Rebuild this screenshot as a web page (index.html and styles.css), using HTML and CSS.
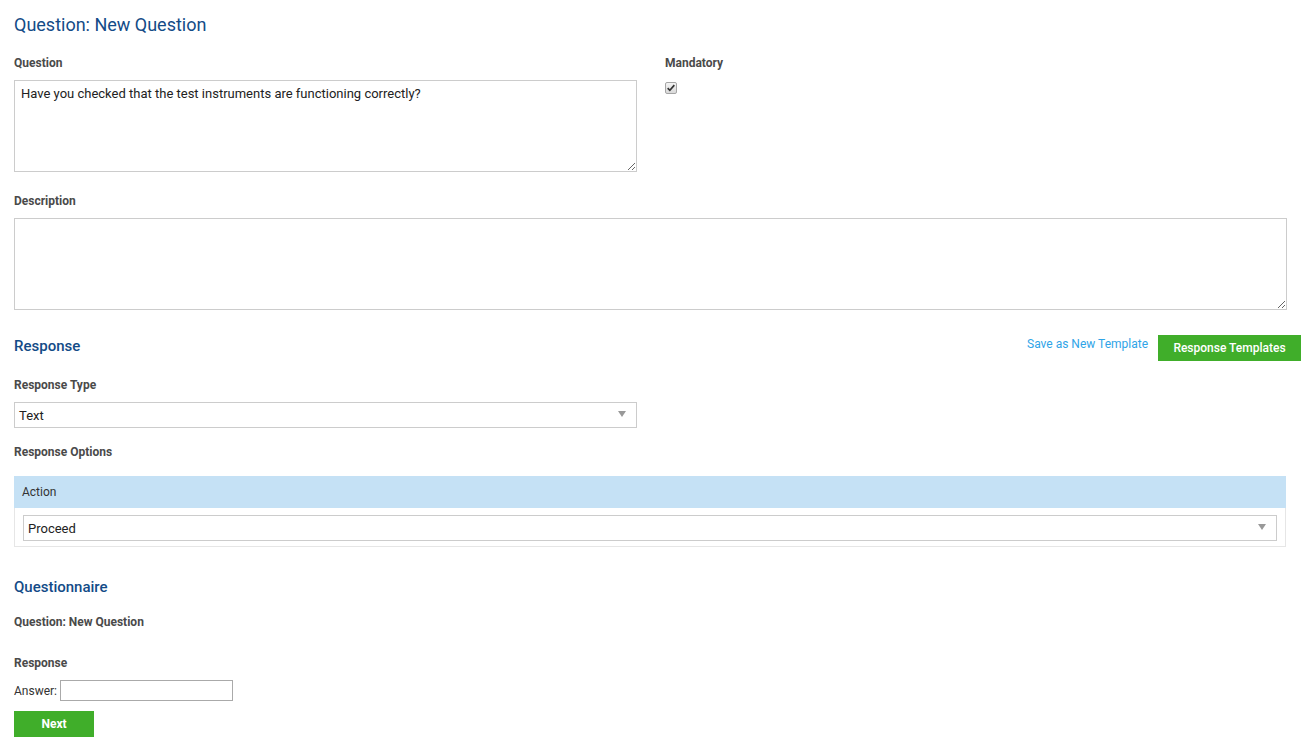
FILE: index.html
```html
<!DOCTYPE html>
<html>
<head>
<meta charset="utf-8">
<link rel="stylesheet" href="styles.css">
</head>
<body>
<div class="page">
  <h1 class="title">Question: New Question</h1>
  <div class="row-top">
    <div class="col-q">
      <div class="label">Question</div>
      <textarea class="ta ta-q">Have you checked that the test instruments are functioning correctly?</textarea>
    </div>
    <div class="col-m">
      <div class="label">Mandatory</div>
      <span class="cb" role="checkbox" aria-checked="true"><svg viewBox="0 0 12 12" width="10" height="10"><path d="M2 6.2 L4.6 8.8 L10 2.6" fill="none" stroke="#333" stroke-width="2"/></svg></span>
    </div>
  </div>
  <div class="label lbl-desc">Description</div>
  <textarea class="ta ta-d"></textarea>

  <div class="resp-head">
    <h2 class="section">Response</h2>
    <div class="resp-actions">
      <a class="link">Save as New Template</a>
      <button class="btn btn-tpl">Response Templates</button>
    </div>
  </div>

  <div class="label lbl-rt">Response Type</div>
  <div class="select sel-rt"><span>Text</span><span class="arrow"></span></div>

  <div class="label lbl-ro">Response Options</div>
  <div class="table">
    <div class="thead">Action</div>
    <div class="trow">
      <div class="select sel-act"><span>Proceed</span><span class="arrow"></span></div>
    </div>
  </div>

  <h2 class="section sec-qn">Questionnaire</h2>
  <div class="label lbl-qq">Question: New Question</div>
  <div class="label lbl-r">Response</div>
  <div class="answer"><span>Answer:</span><input type="text" class="ans-input"></div>
  <button class="btn btn-next">Next</button>
</div>
</body>
</html>
```
FILE: styles.css
```css
* { box-sizing: border-box; }
html, body { margin: 0; padding: 0; background: #fff; }
body { font-family: Roboto, "Liberation Sans", sans-serif; color: #333; }
.page { padding: 0 17px 0 14px; }
.title { margin: 0; padding-top: 14px; font-size: 18px; font-weight: 400; color: #134b87; line-height: 22px; }
.label { font-size: 12px; font-weight: 700; color: #4a4a4a; line-height: 14px; }
.row-top { display: flex; margin-top: 20px; }
.col-q { width: 651px; }
.ta { display: block; width: 100%; border: 1px solid #ccc; font-family: Roboto, "Liberation Sans", sans-serif; font-size: 13px; color: #222; padding: 5px 6px; resize: vertical; margin: 0; }
.col-q .label { margin-bottom: 10px; }
.ta-q { width: 623px; height: 92px; line-height: 16px; }
.col-m .label { margin-bottom: 12px; }
.cb { display: flex; align-items: center; justify-content: center; width: 12px; height: 12px; border: 1px solid #a5a5a5; border-radius: 2px; background: linear-gradient(#f4f4f4, #d9d9d9); margin-left: 0; }
.lbl-desc { margin-top: 22px; margin-bottom: 10px; }
.ta-d { width: 1273px; height: 92px; }
.resp-head { display: flex; justify-content: space-between; align-items: flex-start; margin-top: 25px; margin-right: -14px; }
.section { margin: 0; font-size: 15px; font-weight: 500; color: #134b87; line-height: 18px; }
.resp-head .section { margin-top: 2px; }
.resp-actions { display: flex; align-items: flex-start; }
.link { color: #2fa4e7; font-size: 12px; line-height: 14px; margin-top: 2px; margin-right: 10px; cursor: pointer; }
.btn { border: none; background: #40ae2a; color: #fff; font-family: Roboto, "Liberation Sans", sans-serif; font-size: 12px; font-weight: 500; margin: 0; padding: 0; }
.btn-tpl { width: 143px; height: 26px; }
.lbl-rt { margin-top: 17px; margin-bottom: 10px; }
.select { display: flex; align-items: center; justify-content: space-between; border: 1px solid #ccc; height: 26px; padding: 0 10px 0 4px; font-size: 13px; color: #222; background: #fff; }
.sel-rt { width: 623px; }
.arrow { width: 0; height: 0; border-left: 4px solid transparent; border-right: 4px solid transparent; border-top: 6px solid #999; margin-top: -3px; }
.lbl-ro { margin-top: 17px; margin-bottom: 17px; }
.table { width: 1272px; border: 1px solid #e6e6e6; border-top: none; }
.thead { background: #c5e1f5; height: 32px; line-height: 32px; padding-left: 8px; font-size: 12px; color: #333; margin: 0 -1px; }
.trow { padding: 7px 8px 5px 8px; }
.sel-act { width: 1254px; height: 26px; }
.sec-qn { margin-top: 31px; }
.lbl-qq { margin-top: 19px; }
.lbl-r { margin-top: 27px; }
.answer { display: flex; align-items: center; margin-top: 10px; font-size: 12px; color: #333; }
.ans-input { width: 173px; height: 21px; border: 1px solid #aaa; margin: 0 0 0 3px; padding: 0; }
.btn-next { display: block; width: 80px; height: 26px; margin-top: 10px; font-weight: 700; }
```
